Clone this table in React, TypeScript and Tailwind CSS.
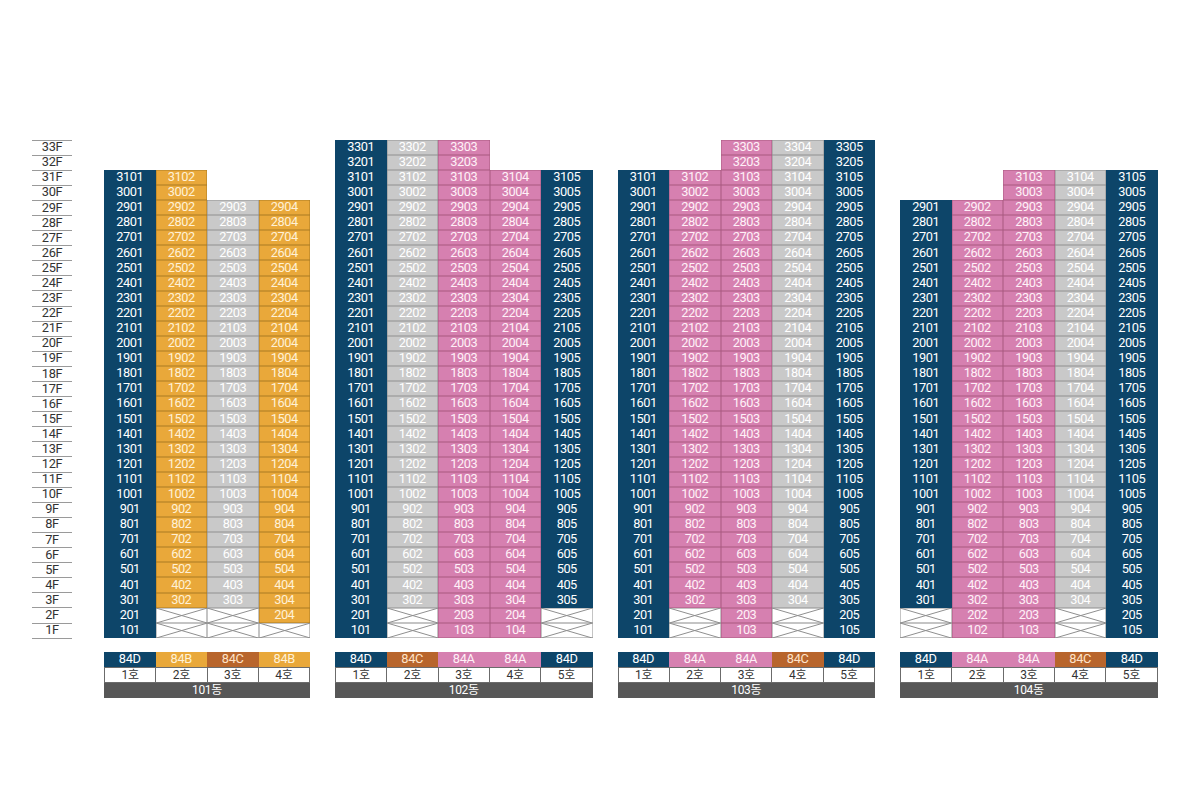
import React from "react";

type Kind = "blue" | "orange" | "gray" | "pink";
type Unit = { type: string; tag: Kind | "brown"; color: Kind; top: number; x: number[] };
type Building = { name: string; units: Unit[] };

const buildings: Building[] = [
  {
    name: "101동",
    units: [
      { type: "84D", tag: "blue", color: "blue", top: 31, x: [] },
      { type: "84B", tag: "orange", color: "orange", top: 31, x: [1, 2] },
      { type: "84C", tag: "brown", color: "gray", top: 29, x: [1, 2] },
      { type: "84B", tag: "orange", color: "orange", top: 29, x: [1] },
    ],
  },
  {
    name: "102동",
    units: [
      { type: "84D", tag: "blue", color: "blue", top: 33, x: [] },
      { type: "84C", tag: "brown", color: "gray", top: 33, x: [1, 2] },
      { type: "84A", tag: "pink", color: "pink", top: 33, x: [] },
      { type: "84A", tag: "pink", color: "pink", top: 31, x: [] },
      { type: "84D", tag: "blue", color: "blue", top: 31, x: [1, 2] },
    ],
  },
  {
    name: "103동",
    units: [
      { type: "84D", tag: "blue", color: "blue", top: 31, x: [] },
      { type: "84A", tag: "pink", color: "pink", top: 31, x: [1, 2] },
      { type: "84A", tag: "pink", color: "pink", top: 33, x: [] },
      { type: "84C", tag: "brown", color: "gray", top: 33, x: [1, 2] },
      { type: "84D", tag: "blue", color: "blue", top: 33, x: [] },
    ],
  },
  {
    name: "104동",
    units: [
      { type: "84D", tag: "blue", color: "blue", top: 29, x: [1, 2] },
      { type: "84A", tag: "pink", color: "pink", top: 29, x: [] },
      { type: "84A", tag: "pink", color: "pink", top: 31, x: [] },
      { type: "84C", tag: "brown", color: "gray", top: 31, x: [1, 2] },
      { type: "84D", tag: "blue", color: "blue", top: 31, x: [] },
    ],
  },
];

const cellStyle: Record<Kind, string> = {
  blue: "bg-[#0d4569] text-white",
  orange: "bg-[#e9a83a] text-[#fff1d6] shadow-[inset_0_0_0_0.5px_#a97a22]",
  gray: "bg-[#c9c9c9] text-white shadow-[inset_0_0_0_0.5px_#8f8f8f]",
  pink: "bg-[#d680b0] text-[#fff0f7] shadow-[inset_0_0_0_0.5px_#a8587f]",
};

const tagStyle: Record<Kind | "brown", string> = {
  blue: "bg-[#0d4569] text-white",
  orange: "bg-[#e9a83a] text-[#fff1d6]",
  gray: "bg-[#c9c9c9] text-white",
  pink: "bg-[#d680b0] text-[#fff0f7]",
  brown: "bg-[#b8652c] text-[#ffe3c8]",
};

const FONT = "font-['Roboto','Noto_Sans_CJK_KR',sans-serif]";
const FLOORS = Array.from({ length: 33 }, (_, i) => 33 - i);

const XCell = () => (
  <div className="h-[15.1px] bg-white shadow-[inset_0_0_0_0.5px_#8a8a8a]">
    <svg className="w-full h-full block" viewBox="0 0 100 20" preserveAspectRatio="none">
      <line x1="0" y1="0" x2="100" y2="20" stroke="#8f8f8f" strokeWidth="1" vectorEffect="non-scaling-stroke" />
      <line x1="100" y1="0" x2="0" y2="20" stroke="#8f8f8f" strokeWidth="1" vectorEffect="non-scaling-stroke" />
    </svg>
  </div>
);

const UnitColumn: React.FC<{ unit: Unit; no: number }> = ({ unit, no }) => {
  const floors = FLOORS.filter((f) => f <= unit.top);
  return (
    <div className="w-[51.5px] h-[498.3px] flex flex-col justify-end">
      {floors.map((f) =>
        unit.x.includes(f) ? (
          <XCell key={f} />
        ) : (
          <div
            key={f}
            className={`h-[15.1px] flex items-center justify-center text-[12.8px] leading-none tracking-[-0.5px] ${cellStyle[unit.color]}`}
          >
            {f * 100 + no}
          </div>
        )
      )}
    </div>
  );
};

const BuildingBlock: React.FC<{ b: Building }> = ({ b }) => (
  <div className="flex flex-col">
    <div className="flex">
      {b.units.map((u, i) => (
        <UnitColumn key={i} unit={u} no={i + 1} />
      ))}
    </div>
    <div className="mt-[14px] flex flex-col">
      <div className="flex">
        {b.units.map((u, i) => (
          <div
            key={i}
            className={`w-[51.5px] h-[15px] flex items-center justify-center text-[12.8px] leading-none tracking-[-0.3px] ${tagStyle[u.tag]}`}
          >
            {u.type}
          </div>
        ))}
      </div>
      <div className="flex border border-[#6b6b6b] bg-white">
        {b.units.map((u, i) => (
          <div
            key={i}
            className={`flex-1 h-[14px] flex items-center justify-center text-[12px] leading-none tracking-[-0.3px] text-[#333] ${i > 0 ? "border-l border-[#6b6b6b]" : ""}`}
          >
            {i + 1}호
          </div>
        ))}
      </div>
      <div className="h-[15px] bg-[#575757] text-white flex items-center justify-center text-[12px] leading-none tracking-[-0.3px]">
        {b.name}
      </div>
    </div>
  </div>
);

export default function App() {
  return (
    <div className={`w-[1200px] h-[800px] bg-white ${FONT}`}>
      <div className="flex items-start pt-[139.5px] pl-[32px]">
        <div className="w-[40px] mr-[32px] flex flex-col border-t border-[#9a9a9a]">
          {FLOORS.map((f) => (
            <div
              key={f}
              className="h-[15.1px] border-b border-[#9a9a9a] flex items-center justify-center text-[12.8px] leading-none tracking-[-0.4px] text-[#333]"
            >
              {f}F
            </div>
          ))}
        </div>
        <div className="flex gap-[25px]">
          {buildings.map((b) => (
            <BuildingBlock key={b.name} b={b} />
          ))}
        </div>
      </div>
    </div>
  );
}
